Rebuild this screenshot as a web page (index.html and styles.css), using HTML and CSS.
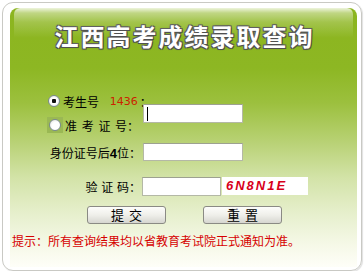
FILE: index.html
```html
<!DOCTYPE html>
<html lang="zh-CN">
<head>
  <meta charset="UTF-8">
  <title>江西高考成绩录取查询</title>
  <link rel="stylesheet" href="styles.css">
</head>
<body>

  <div class="panel">
    <div class="box">
      <h1 class="title">江西高考成绩录取查询</h1>

      <form class="query">
        <label class="lbl lbl-radio r1"><input type="radio" name="type" checked>考生号 <span class="num">1436</span>：</label>
        <label class="lbl lbl-radio r2"><span class="radio-bg"><input type="radio" name="type"></span>准 考 证 号：</label>
        <input class="field f1" type="text">

        <span class="lbl r3">身份证号后<b>4</b>位：</span>
        <input class="field f2" type="text">

        <span class="lbl r4">验 证 码：</span>
        <div class="code-row">
          <input class="field f3" type="text">
          <span class="captcha">6N8N1E</span>
        </div>
      </form>

      <div class="buttons">
        <button type="button">提 交</button>
        <button type="button">重 置</button>
      </div>

      <p class="hint">提示：所有查询结果均以省教育考试院正式通知为准。</p>
    </div>
  </div>

</body>
</html>
```

FILE: styles.css
```css
body {
  margin: 0;
  background: #fff;
  font-family: "Noto Sans CJK SC", "DejaVu Sans", sans-serif;
  font-size: 12px;
  color: #000;
}

.panel {
  margin: 2px 2px 0 2px;
  width: 360px;
  height: 269px;
  box-sizing: border-box;
  border: 1px solid #c9c9c4;
  border-radius: 11px;
  padding: 5px 4px 3px 7px;
  box-shadow: 1px 1px 1px rgba(0,0,0,0.12);
}

.box {
  height: 100%;
  border-radius: 8px 8px 0 0;
  background: linear-gradient(#8cb51f 0, #8db723 60px, #9cc03e 95px, #b9d276 135px, #d3e3a8 170px, #e6efcc 205px, #f5f8e6 235px, #fefef8 259px);
}

.title {
  margin: 0 4px;
  height: 56px;
  line-height: 56px;
  text-align: center;
  font-size: 24px;
  font-weight: 700;
  letter-spacing: 2px;
  text-indent: 2px;
  color: #fff;
  border-radius: 6px 6px 0 0;
  background: linear-gradient(rgba(255,255,255,0.85) 0, rgba(255,255,255,0.45) 5px, rgba(255,255,255,0.2) 14px, rgba(255,255,255,0) 30px);
  text-shadow: 1px 1px 0 #505050, -1px -1px 0 #606060, 1px -1px 0 #606060, -1px 1px 0 #505050, 0 0 2px #333;
}

.query {
  display: grid;
  grid-template-columns: 133px auto;
  grid-template-rows: 24px 24px 30px 38px;
  margin-top: 25px;
  align-items: center;
}

.lbl {
  justify-self: end;
  padding-right: 2px;
  white-space: pre;
  word-spacing: 1px;
}

.lbl-radio {
  justify-self: start;
  display: flex;
  align-items: center;
}

.r1 { grid-row: 1; margin-left: 38px; }
.r2 { grid-row: 2; margin-left: 38px; word-spacing: 2px; }
.r3 { grid-row: 3; }
.r4 { grid-row: 4; }

.lbl b {
  font-family: "Liberation Sans", Arial, sans-serif;
  font-size: 13px;
}

.num {
  color: #cc2200;
  font-family: "DejaVu Sans", sans-serif;
  font-size: 11px;
  margin: 0 2px 0 7px;
}

input[type=radio] {
  appearance: none;
  width: 12px;
  height: 12px;
  margin: 0 3px 0 0;
  border: 1px solid #7a8a90;
  border-radius: 50%;
  background: radial-gradient(circle at 60% 60%, #fff 45%, #dcdcd6 100%);
  box-sizing: border-box;
}

input[type=radio]:checked {
  background: radial-gradient(circle, #111 0, #111 2px, #fff 2.5px, #fff 45%, #dcdcd6 100%);
}

.radio-bg {
  display: flex;
  align-items: center;
  justify-content: center;
  width: 16px;
  height: 16px;
  margin-left: -1px;
  margin-right: 2px;
  background: #9ab854;
}

.radio-bg input[type=radio] {
  margin: 0;
}

.field {
  box-sizing: border-box;
  height: 19px;
  margin: 0;
  padding: 0 3px;
  border: 1px solid #b4b8a6;
  border-top-color: #9da190;
  background: #fff;
  outline: none;
}

.f1 {
  grid-row: 1 / span 2;
  grid-column: 2;
  width: 100px;
  margin-top: 1px;
  background: linear-gradient(#000, #000) no-repeat 3px 2px / 1px 14px, #fff;
}

.f2 {
  grid-row: 3;
  grid-column: 2;
  width: 100px;
  height: 18px;
}

.code-row {
  grid-row: 4;
  grid-column: 2;
  display: flex;
  align-items: center;
  margin-left: -1px;
}

.f3 {
  width: 79px;
}

.captcha {
  width: 86px;
  height: 18px;
  margin-left: 1px;
  padding-left: 4px;
  box-sizing: border-box;
  background: #fff;
  color: #d8001a;
  font-family: "Liberation Sans", Arial, sans-serif;
  font-size: 13px;
  font-weight: 700;
  font-style: italic;
  letter-spacing: 2px;
  line-height: 18px;
}

.buttons {
  display: flex;
  gap: 37px;
  padding-left: 77px;
  margin-top: 1px;
}

.buttons button {
  width: 79px;
  height: 18px;
  padding: 0;
  border: 1px solid #8a8a84;
  border-radius: 3px;
  background: linear-gradient(#fdfdfb 0, #efefea 50%, #d6d6d0 100%);
  font-family: "Noto Sans CJK SC", sans-serif;
  font-size: 13px;
  line-height: 16px;
  word-spacing: 2px;
  color: #000;
}

.hint {
  margin: 9px 0 0 2px;
  color: #d60000;
  font-size: 12px;
  line-height: 16px;
}
```
